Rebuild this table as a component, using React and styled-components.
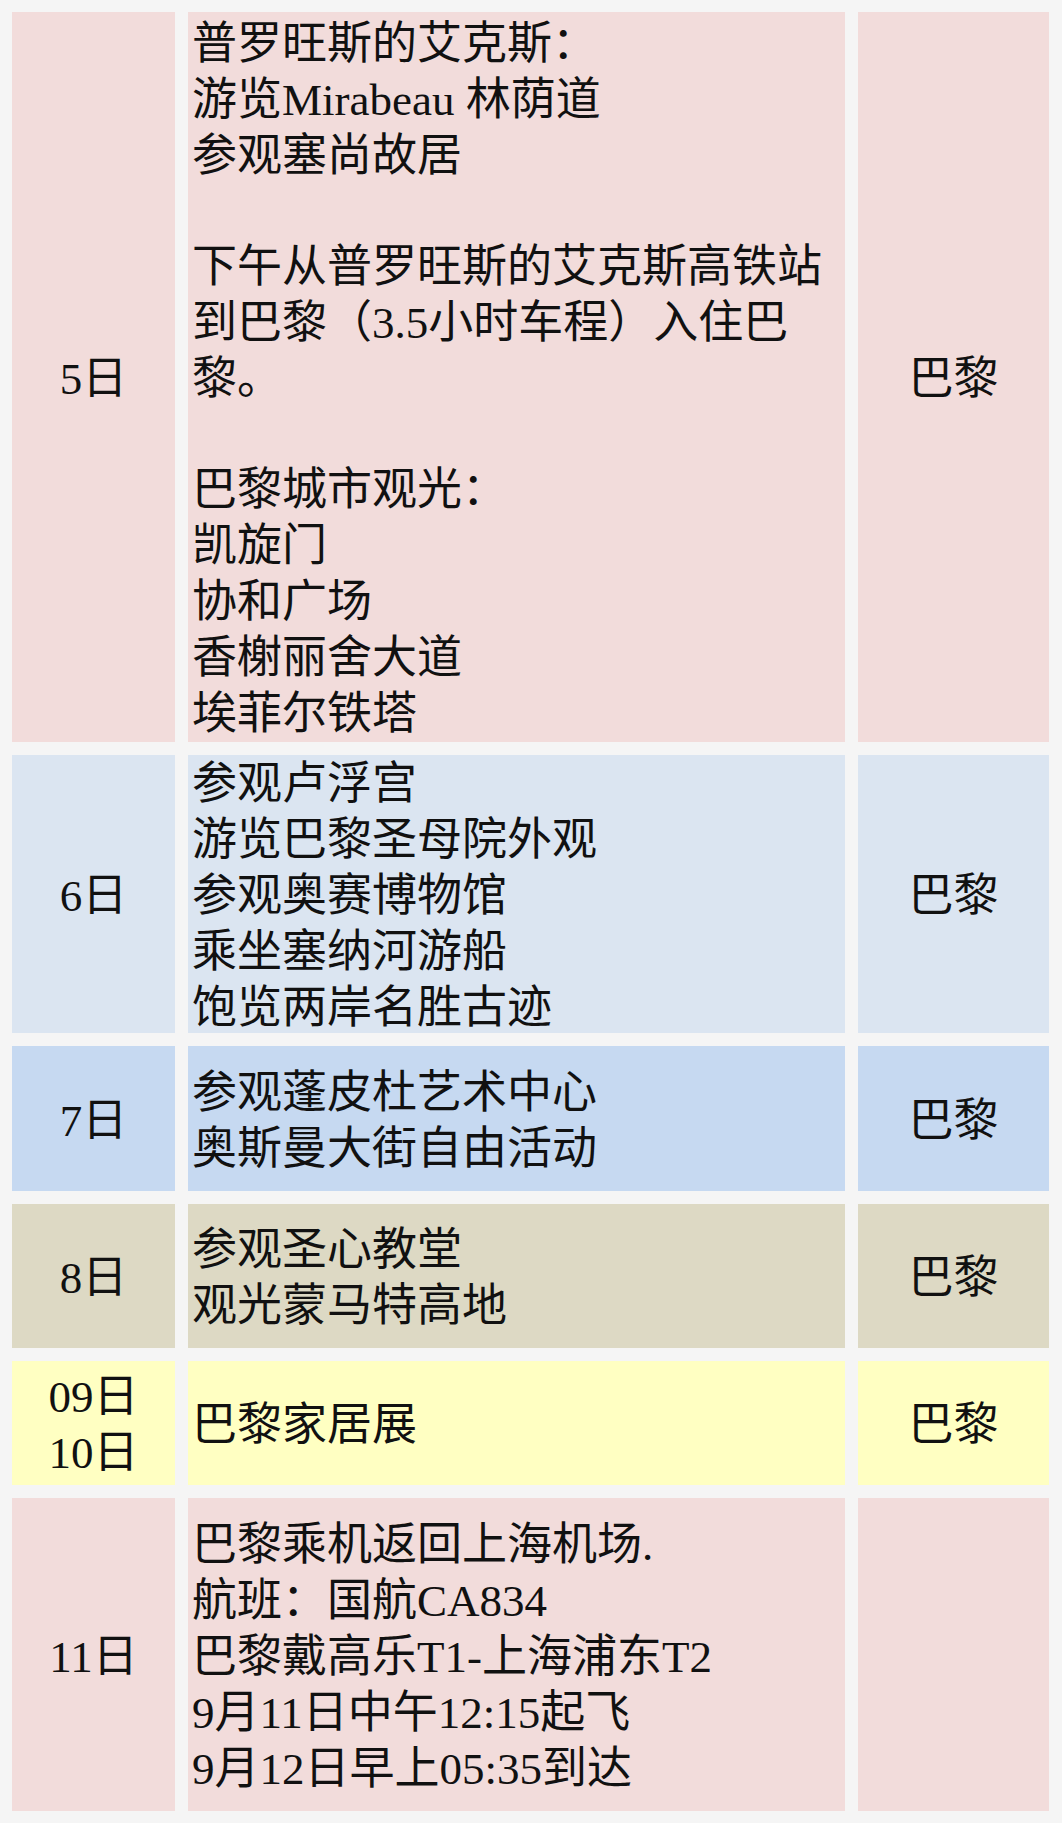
import React from 'react';
import styled, { createGlobalStyle } from 'styled-components';

const GlobalStyle = createGlobalStyle`
  html, body {
    margin: 0;
    padding: 0;
    background: #f5f5f5;
  }
`;

const rows = [
  {
    day: ['5日'],
    city: '巴黎',
    color: '#f2dcdb',
    height: 730,
    lines: [
      '普罗旺斯的艾克斯：',
      '游览Mirabeau 林荫道',
      '参观塞尚故居',
      '',
      '下午从普罗旺斯的艾克斯高铁站',
      '到巴黎（3.5小时车程）入住巴',
      '黎。',
      '',
      '巴黎城市观光：',
      '凯旋门',
      '协和广场',
      '香榭丽舍大道',
      '埃菲尔铁塔',
    ],
  },
  {
    day: ['6日'],
    city: '巴黎',
    color: '#dbe5f1',
    height: 278,
    lines: ['参观卢浮宫', '游览巴黎圣母院外观', '参观奥赛博物馆', '乘坐塞纳河游船', '饱览两岸名胜古迹'],
  },
  {
    day: ['7日'],
    city: '巴黎',
    color: '#c6d9f1',
    height: 145,
    lines: ['参观蓬皮杜艺术中心', '奥斯曼大街自由活动'],
  },
  {
    day: ['8日'],
    city: '巴黎',
    color: '#ddd9c4',
    height: 144,
    lines: ['参观圣心教堂', '观光蒙马特高地'],
  },
  {
    day: ['09日', '10日'],
    city: '巴黎',
    color: '#ffffc2',
    height: 124,
    lines: ['巴黎家居展'],
  },
  {
    day: ['11日'],
    city: '',
    color: '#f2dcdb',
    height: 313,
    lines: [
      '巴黎乘机返回上海机场.',
      '航班：国航CA834',
      '巴黎戴高乐T1-上海浦东T2',
      '9月11日中午12:15起飞',
      '9月12日早上05:35到达',
    ],
  },
];

const Page = styled.div`
  display: flex;
  flex-direction: column;
  gap: 13px;
  padding: 12px 13px 12px 12px;
  width: 1062px;
  box-sizing: border-box;
  font-family: "Liberation Serif", "Noto Sans CJK SC", serif;
  font-size: 45px;
  line-height: 56px;
  color: #111;
`;

const Row = styled.div`
  display: grid;
  grid-template-columns: 163px 657px 191px;
  column-gap: 13px;
  height: ${p => p.$h}px;
`;

const Cell = styled.div`
  background: ${p => p.$bg};
  display: flex;
  flex-direction: column;
  justify-content: center;
  align-items: ${p => (p.$left ? 'flex-start' : 'center')};
  padding-left: ${p => (p.$left ? '4px' : '0')};
  padding-top: 4px;
  box-sizing: border-box;
  white-space: nowrap;
  overflow: hidden;
`;

const Line = styled.div`
  height: 56px;
`;

export default function App() {
  return (
    <>
      <GlobalStyle />
      <Page>
        {rows.map((r, i) => (
          <Row key={i} $h={r.height}>
            <Cell $bg={r.color}>
              {r.day.map((d, j) => (
                <Line key={j}>{d}</Line>
              ))}
            </Cell>
            <Cell $bg={r.color} $left>
              {r.lines.map((l, j) => (
                <Line key={j}>{l}</Line>
              ))}
            </Cell>
            <Cell $bg={r.color}>{r.city && <Line>{r.city}</Line>}</Cell>
          </Row>
        ))}
      </Page>
    </>
  );
}
